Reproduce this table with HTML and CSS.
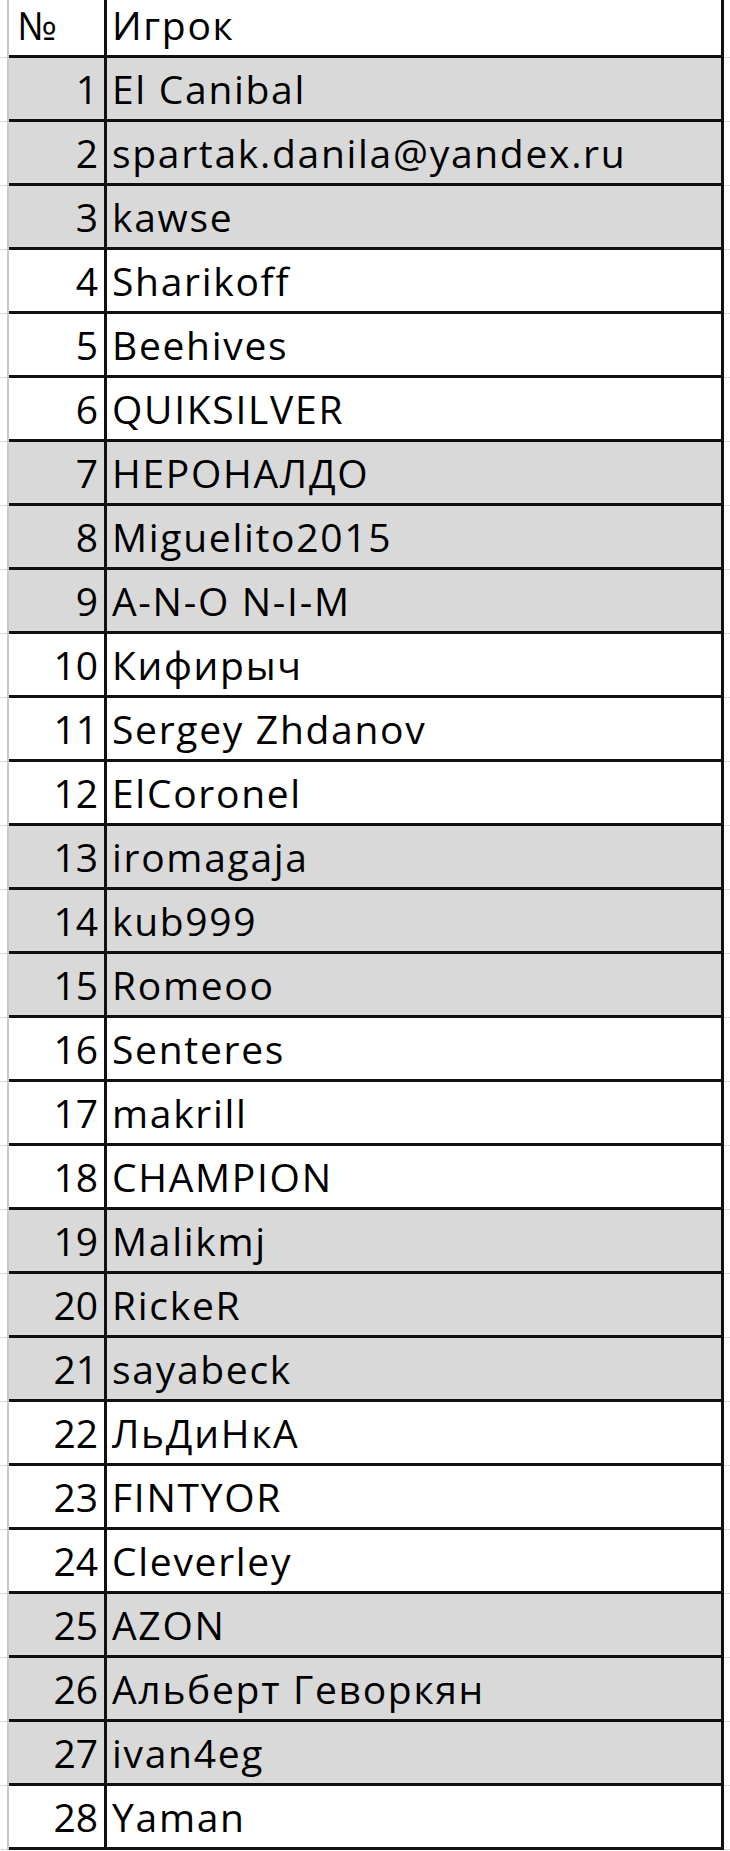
FILE: index.html
```html
<!DOCTYPE html>
<html lang="ru">
<head>
<meta charset="utf-8">
<link rel="stylesheet" href="styles.css">
</head>
<body>
<div class="sheet">
  <div class="row head"><div class="gut"></div><div class="num hnum">№</div><div class="name">Игрок</div><div class="rgut"></div></div>
  <div class="row g"><div class="gut"></div><div class="num">1</div><div class="name">El Canibal</div><div class="rgut"></div></div>
  <div class="row g"><div class="gut"></div><div class="num">2</div><div class="name">spartak.danila@yandex.ru</div><div class="rgut"></div></div>
  <div class="row g"><div class="gut"></div><div class="num">3</div><div class="name">kawse</div><div class="rgut"></div></div>
  <div class="row"><div class="gut"></div><div class="num">4</div><div class="name">Sharikoff</div><div class="rgut"></div></div>
  <div class="row"><div class="gut"></div><div class="num">5</div><div class="name">Beehives</div><div class="rgut"></div></div>
  <div class="row"><div class="gut"></div><div class="num">6</div><div class="name">QUIKSILVER</div><div class="rgut"></div></div>
  <div class="row g"><div class="gut"></div><div class="num">7</div><div class="name">НЕРОНАЛДО</div><div class="rgut"></div></div>
  <div class="row g"><div class="gut"></div><div class="num">8</div><div class="name">Miguelito2015</div><div class="rgut"></div></div>
  <div class="row g"><div class="gut"></div><div class="num">9</div><div class="name">A-N-O N-I-M</div><div class="rgut"></div></div>
  <div class="row"><div class="gut"></div><div class="num">10</div><div class="name">Кифирыч</div><div class="rgut"></div></div>
  <div class="row"><div class="gut"></div><div class="num">11</div><div class="name">Sergey Zhdanov</div><div class="rgut"></div></div>
  <div class="row"><div class="gut"></div><div class="num">12</div><div class="name">ElCoronel</div><div class="rgut"></div></div>
  <div class="row g"><div class="gut"></div><div class="num">13</div><div class="name">iromagaja</div><div class="rgut"></div></div>
  <div class="row g"><div class="gut"></div><div class="num">14</div><div class="name">kub999</div><div class="rgut"></div></div>
  <div class="row g"><div class="gut"></div><div class="num">15</div><div class="name">Romeoo</div><div class="rgut"></div></div>
  <div class="row"><div class="gut"></div><div class="num">16</div><div class="name">Senteres</div><div class="rgut"></div></div>
  <div class="row"><div class="gut"></div><div class="num">17</div><div class="name">makrill</div><div class="rgut"></div></div>
  <div class="row"><div class="gut"></div><div class="num">18</div><div class="name">CHAMPION</div><div class="rgut"></div></div>
  <div class="row g"><div class="gut"></div><div class="num">19</div><div class="name">Malikmj</div><div class="rgut"></div></div>
  <div class="row g"><div class="gut"></div><div class="num">20</div><div class="name">RickeR</div><div class="rgut"></div></div>
  <div class="row g"><div class="gut"></div><div class="num">21</div><div class="name">sayabeck</div><div class="rgut"></div></div>
  <div class="row"><div class="gut"></div><div class="num">22</div><div class="name">ЛьДиНкА</div><div class="rgut"></div></div>
  <div class="row"><div class="gut"></div><div class="num">23</div><div class="name">FINTYOR</div><div class="rgut"></div></div>
  <div class="row"><div class="gut"></div><div class="num">24</div><div class="name">Cleverley</div><div class="rgut"></div></div>
  <div class="row g"><div class="gut"></div><div class="num">25</div><div class="name">AZON</div><div class="rgut"></div></div>
  <div class="row g"><div class="gut"></div><div class="num">26</div><div class="name">Альберт Геворкян</div><div class="rgut"></div></div>
  <div class="row g"><div class="gut"></div><div class="num">27</div><div class="name">ivan4eg</div><div class="rgut"></div></div>
  <div class="row"><div class="gut"></div><div class="num">28</div><div class="name">Yaman</div><div class="rgut"></div></div>
</div>
</body>
</html>
```

FILE: styles.css
```css
html, body {
  margin: 0;
  padding: 0;
  background: #ffffff;
}

.sheet {
  width: 730px;
  font-family: "Open Sans", Lato, sans-serif;
  font-size: 39px;
  font-weight: 500;
  letter-spacing: 1.7px;
  color: #000000;
}

.row {
  display: grid;
  grid-template-columns: 9px 98px 617px 6px;
  height: 64px;
}

.row.head {
  height: 58px;
}

.gut {
  border-right: 2px solid #c9c9c9;
  border-bottom: 1px solid #d6d6d6;
}

.rgut {
  border-bottom: 1px solid #d6d6d6;
}

.num,
.name {
  display: flex;
  align-items: flex-end;
  line-height: 39px;
  padding-bottom: 11px;
  border-bottom: 3px solid #111111;
  border-right: 3px solid #111111;
  white-space: nowrap;
}

.num {
  justify-content: flex-end;
  padding-right: 6px;
  letter-spacing: 0;
}

.num.hnum {
  justify-content: flex-start;
  padding-left: 8px;
  padding-right: 0;
}

.name {
  padding-left: 5px;
}

.row.g .num,
.row.g .name {
  background: #d9d9d9;
}
```
